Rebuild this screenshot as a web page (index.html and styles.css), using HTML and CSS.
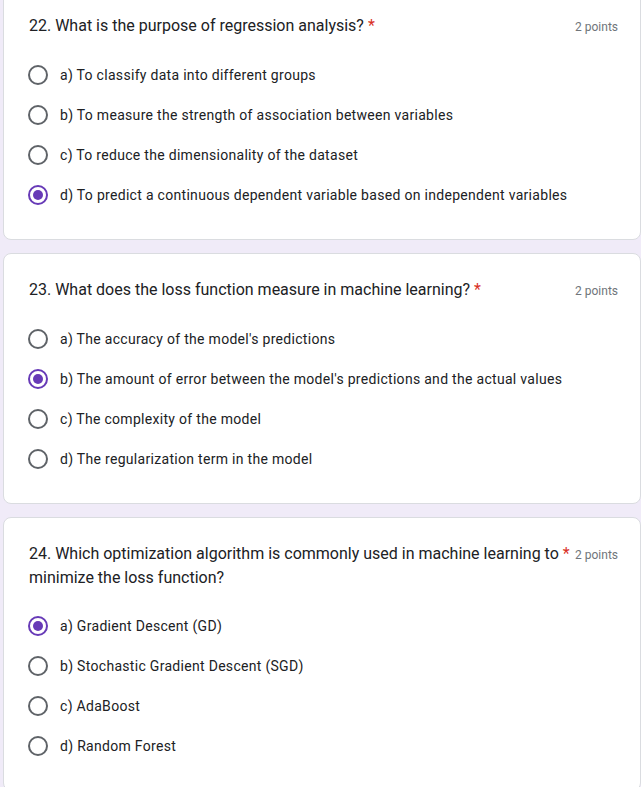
FILE: index.html
```html
<!DOCTYPE html>
<html>
<head>
<meta charset="utf-8">
<link rel="stylesheet" href="styles.css">
</head>
<body>
<main class="form">
  <section class="card first">
    <div class="q-head">
      <div class="q-title">22. What is the purpose of regression analysis? <span class="req">*</span></div>
      <div class="q-points">2 points</div>
    </div>
    <div class="options">
      <div class="opt"><span class="radio"></span><span class="label">a) To classify data into different groups</span></div>
      <div class="opt"><span class="radio"></span><span class="label">b) To measure the strength of association between variables</span></div>
      <div class="opt"><span class="radio"></span><span class="label">c) To reduce the dimensionality of the dataset</span></div>
      <div class="opt"><span class="radio checked"></span><span class="label">d) To predict a continuous dependent variable based on independent variables</span></div>
    </div>
  </section>
  <section class="card">
    <div class="q-head">
      <div class="q-title">23. What does the loss function measure in machine learning? <span class="req">*</span></div>
      <div class="q-points">2 points</div>
    </div>
    <div class="options">
      <div class="opt"><span class="radio"></span><span class="label">a) The accuracy of the model's predictions</span></div>
      <div class="opt"><span class="radio checked"></span><span class="label">b) The amount of error between the model's predictions and the actual values</span></div>
      <div class="opt"><span class="radio"></span><span class="label">c) The complexity of the model</span></div>
      <div class="opt"><span class="radio"></span><span class="label">d) The regularization term in the model</span></div>
    </div>
  </section>
  <section class="card">
    <div class="q-head">
      <div class="q-title">24. Which optimization algorithm is commonly used in machine learning to&nbsp;<span class="req">*</span> minimize the loss function?</div>
      <div class="q-points">2 points</div>
    </div>
    <div class="options">
      <div class="opt"><span class="radio checked"></span><span class="label">a) Gradient Descent (GD)</span></div>
      <div class="opt"><span class="radio"></span><span class="label">b) Stochastic Gradient Descent (SGD)</span></div>
      <div class="opt"><span class="radio"></span><span class="label">c) AdaBoost</span></div>
      <div class="opt"><span class="radio"></span><span class="label">d) Random Forest</span></div>
    </div>
  </section>
</main>
</body>
</html>
```
FILE: styles.css
```css
html, body {
  margin: 0;
  padding: 0;
  background: #f0ebf8;
  font-family: Roboto, "Liberation Sans", Arial, sans-serif;
  color: #202124;
}
.form {
  display: flex;
  flex-direction: column;
  gap: 13px;
  padding-left: 3px;
  width: 638px;
}
.card {
  background: #fff;
  border: 1px solid #dadce0;
  border-radius: 8px;
  padding: 24px 24px 24px 24px;
}
.card.first {
  margin-top: -11px;
}
.q-head {
  display: flex;
  align-items: flex-start;
  gap: 4px;
  margin-bottom: 16px;
}
.q-title {
  flex: 1;
  font-size: 16px;
  line-height: 24px;
  letter-spacing: 0;
  padding-left: 1px;
}
.req {
  color: #d93025;
}
.q-points {
  font-size: 12px;
  line-height: 24px;
  color: #70757a;
  padding-top: 1px;
  white-space: nowrap;
  margin-right: -2px;
}
.options {
  display: flex;
  flex-direction: column;
}
.opt {
  display: flex;
  align-items: center;
  height: 40px;
}
.radio {
  box-sizing: border-box;
  width: 20px;
  height: 20px;
  border: 2px solid #5f6368;
  border-radius: 50%;
  flex: none;
  position: relative;
}
.radio.checked {
  border-color: #673ab7;
}
.radio.checked::after {
  content: "";
  position: absolute;
  left: 3px;
  top: 3px;
  width: 10px;
  height: 10px;
  border-radius: 50%;
  background: #673ab7;
}
.label {
  margin-left: 12px;
  font-size: 14px;
  line-height: 20px;
  letter-spacing: 0.3px;
}
```
